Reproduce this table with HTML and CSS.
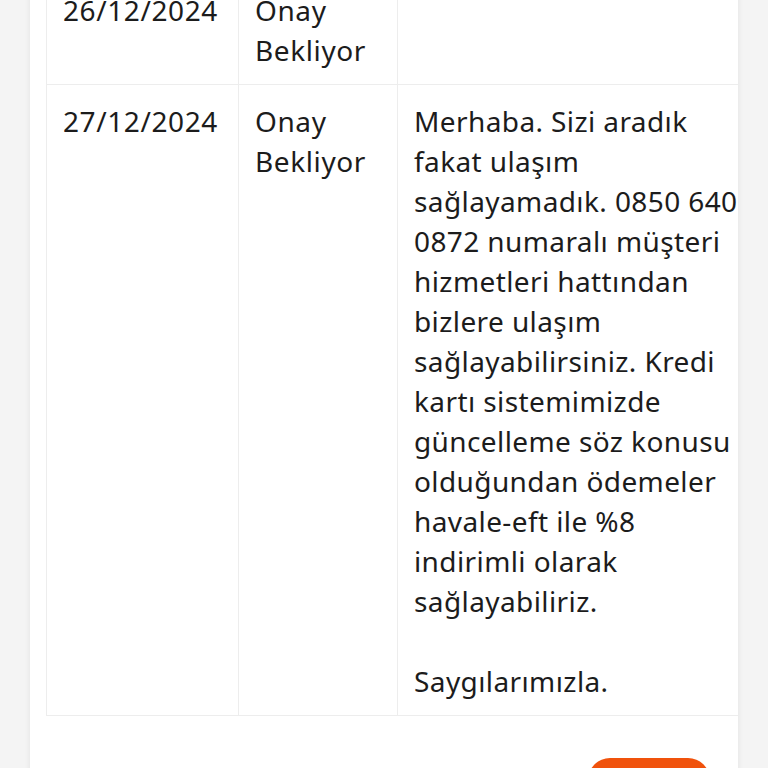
FILE: index.html
```html
<!DOCTYPE html>
<html lang="tr">
<head>
  <meta charset="UTF-8" />
  <title>Talep Geçmişi</title>
  <link rel="stylesheet" href="styles.css">
</head>
<body>
  <div class="kart">
    <div class="tablo-alan">
      <table class="gecmis">
        <tr>
          <td class="tarih">26/12/2024</td>
          <td class="durum">Onay Bekliyor</td>
          <td class="mesaj"></td>
        </tr>
        <tr>
          <td class="tarih">27/12/2024</td>
          <td class="durum">Onay Bekliyor</td>
          <td class="mesaj">Merhaba. Sizi aradık fakat ulaşım sağlayamadık. 0850 640 0872 numaralı müşteri hizmetleri hattından bizlere ulaşım sağlayabilirsiniz. Kredi kartı sistemimizde güncelleme söz konusu olduğundan ödemeler havale-eft ile %8 indirimli olarak sağlayabiliriz.<br><br>Saygılarımızla.</td>
        </tr>
      </table>
    </div>

    <div class="alt">
      <button class="geri">Geri Dön</button>
    </div>
  </div>
</body>
</html>
```

FILE: styles.css
```css
body {
  margin: 0;
  background-color: #f4f4f4;
  font-family: "Noto Sans", sans-serif;
  color: #1c1c1c;
}

.kart {
  margin: -43px 0 0 30px;
  width: 708px;
  padding: 16px 0 0 16px;
  box-sizing: border-box;
  background-color: #fff;
  box-shadow: 0 0 6px rgba(0, 0, 0, 0.08);
  overflow: hidden;
}

.tablo-alan {
  width: 760px;
}

.gecmis {
  border-collapse: collapse;
  table-layout: fixed;
  width: 725px;
  font-size: 28px;
  line-height: 40px;
  letter-spacing: 0.6px;
}

.gecmis td {
  border: 1px solid #ededed;
  padding: 16px 16px 14px;
  vertical-align: top;
}

.tarih {
  width: 159px;
}

.durum {
  width: 126px;
}

.mesaj {
  letter-spacing: 0.4px;
}

.alt {
  display: flex;
  justify-content: flex-end;
  padding: 42px 28px 20px 0;
}

.geri {
  width: 122px;
  height: 44px;
  border: none;
  border-radius: 22px;
  background-color: #f0520c;
  color: #fff;
  font-family: "Noto Sans", sans-serif;
  font-size: 16px;
}
```
